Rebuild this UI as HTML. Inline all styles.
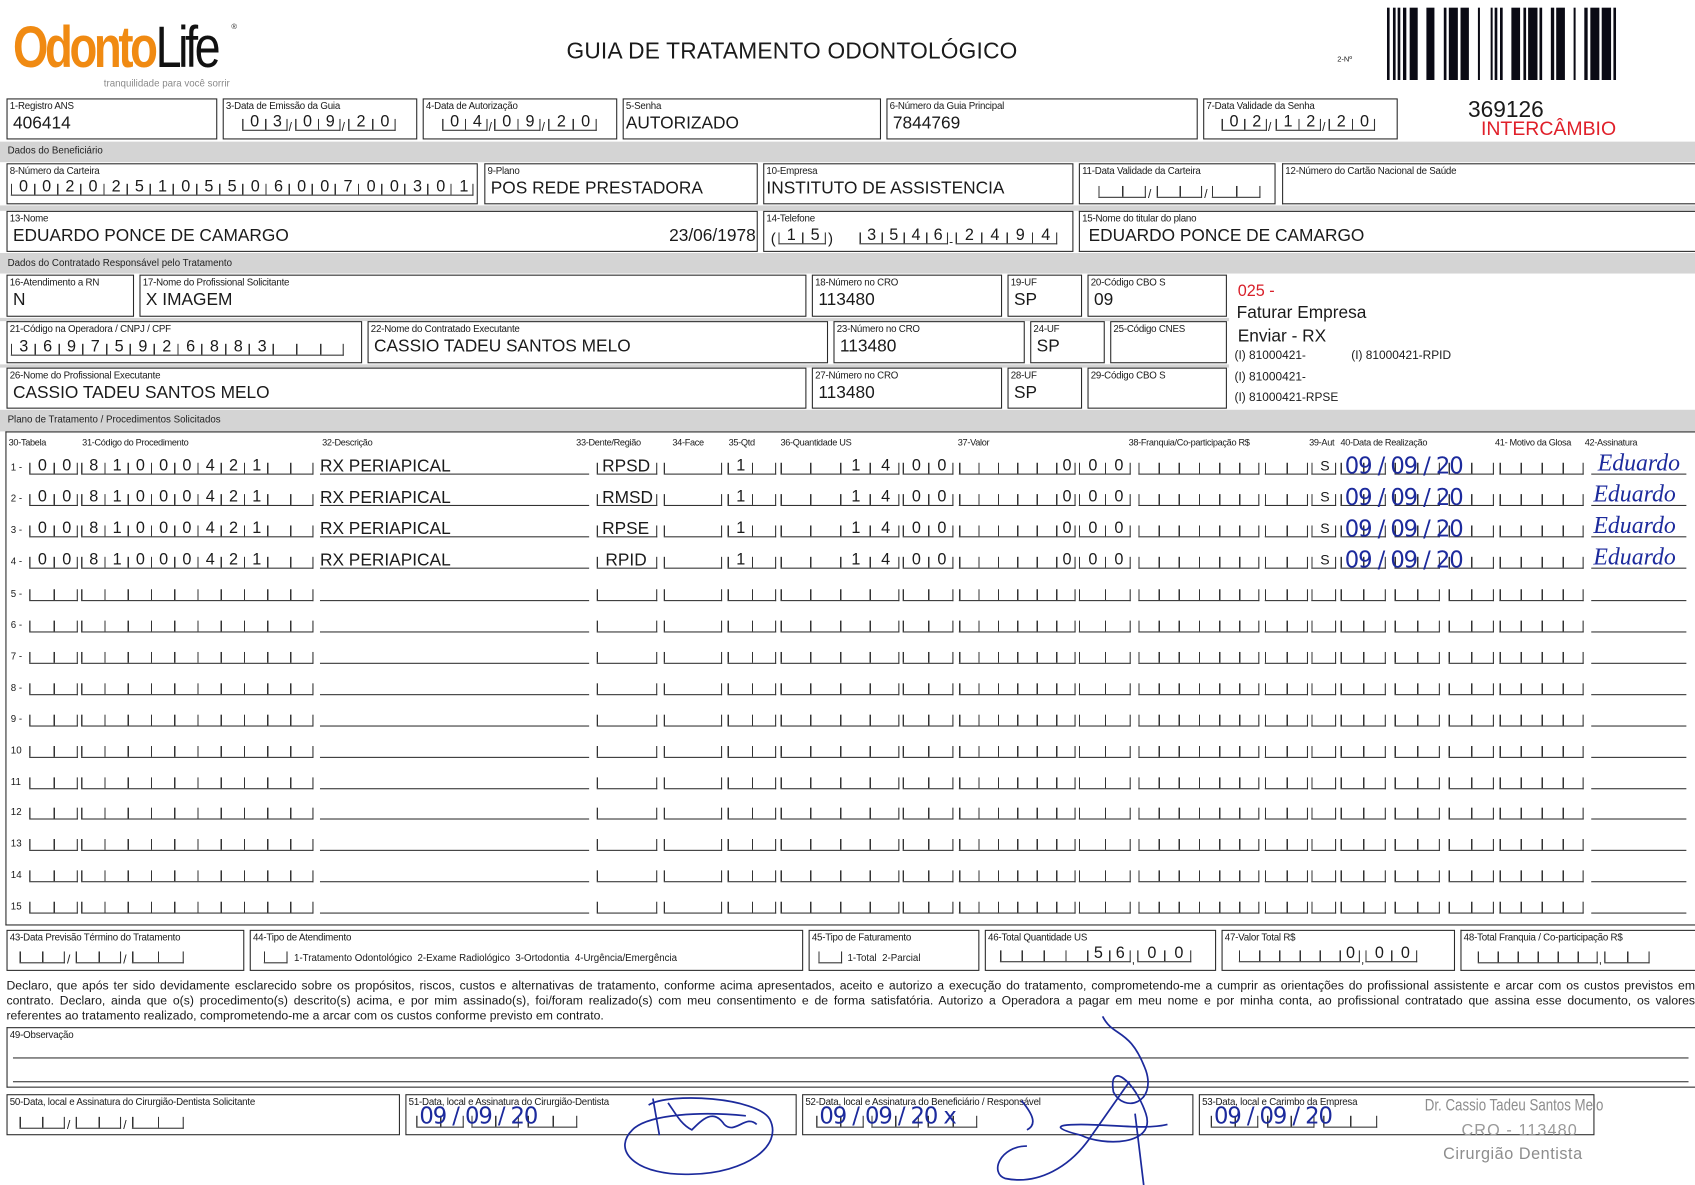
<!DOCTYPE html>
<html><head><meta charset="utf-8">
<style>
*{margin:0;padding:0;box-sizing:border-box}
html,body{width:1695px;height:1185px;overflow:hidden;background:#fff}
body{font-family:"Liberation Sans",Arial,sans-serif;color:#1a1a1a}
#p{position:absolute;left:0;top:0;width:1568px;height:1096px;transform:scale(1.081,1.0812);transform-origin:0 0}
.g{position:absolute;left:0;width:1568px;background:#d4d4d4}
.gt{position:absolute;font-size:9px;left:7px;color:#222}
.b{position:absolute;border:1.6px solid #2a2a2a;background:#fff}
.l{position:absolute;left:2px;top:1px;font-size:9px;white-space:nowrap;letter-spacing:-.2px}
.v{position:absolute;left:5px;top:14px;font-size:16px;white-space:nowrap}
.c{position:absolute;height:11px;border-bottom:1.4px solid #333;border-right:1.3px solid #333;font-style:normal;
 background:repeating-linear-gradient(90deg,#333 0 1.3px,transparent 1.3px var(--w));
 font-size:15px;line-height:11px;white-space:nowrap;overflow:visible}
.c span{position:relative;top:-3px;letter-spacing:calc(var(--w) - 8.3px);padding-left:calc((var(--w) - 8.3px)/2 + 1px)}
.ln{position:absolute;height:11px;border-bottom:1.4px solid #333}
.r{position:absolute;left:0;width:1568px;height:18px}
.r .n{position:absolute;left:10px;top:3px;font-size:9px}
.a{left:27px;top:4px;width:45px;--w:22.5px}
.bb{left:75px;top:4px;width:215px;--w:21.5px}
.d{left:296px;top:4px;width:249px}
.e{left:552px;top:4px;width:56px;--w:56px}
.f{left:614px;top:4px;width:54px;--w:54px}
.gq{left:673px;top:4px;width:45px;--w:22.5px}
.h{left:722px;top:4px;width:110px;--w:27.5px}
.k{left:835px;top:4px;width:47px;--w:23.5px}
.m{left:887px;top:4px;width:108px;--w:18px}
.nn{left:998px;top:4px;width:48px;--w:24px}
.o{left:1053px;top:4px;width:112px;--w:18.67px}
.pp{left:1170px;top:4px;width:40px;--w:20px}
.q{left:1213px;top:4px;width:23px;--w:23px}
.s{left:1240px;top:4px;width:42px;--w:21px}
.t{left:1290px;top:4px;width:42px;--w:21px}
.u{left:1340px;top:4px;width:42px;--w:21px}
.vv{left:1387px;top:4px;width:78px;--w:19.5px}
.w{left:1472px;top:4px;width:88px}
.sl{position:absolute;top:2px;font-size:11px}
.tx{position:absolute;font-size:16px;white-space:nowrap;top:-1px}
.hw{position:absolute;font-family:"Liberation Serif",serif;font-style:italic;color:#1c2a9c;white-space:nowrap}
.hd{position:absolute;font-family:"DejaVu Sans",sans-serif;color:#1c2a9c;white-space:nowrap;font-size:21px;letter-spacing:-1px}
.hl{position:absolute;top:404px;font-size:8.5px;white-space:nowrap;letter-spacing:-.3px}
.par div{font-size:11.3px;line-height:14px;white-space:nowrap;text-align:justify;text-align-last:justify;width:1562px}
</style></head><body><div id="p">

<div style="position:absolute;left:12px;top:14px;font-size:54px;line-height:60px;white-space:nowrap;letter-spacing:-4px">
<span style="color:#f08a12;font-weight:bold;font-family:'Liberation Sans Narrow','Liberation Sans',sans-serif;display:inline-block;transform:scaleX(.78);transform-origin:0 0;margin-right:-36px">Odonto</span><span style="color:#111;font-weight:normal;font-family:'Liberation Sans Narrow','Liberation Sans',sans-serif;display:inline-block;transform:scaleX(.8);transform-origin:0 0">Life</span></div>
<div style="position:absolute;left:214px;top:22px;font-size:7px">®</div>
<div style="position:absolute;left:96px;top:72px;font-size:9px;color:#8a8a8a">tranquilidade para você sorrir</div>

<div style="position:absolute;left:524px;top:36px;font-size:21px;letter-spacing:.2px">GUIA DE TRATAMENTO ODONTOLÓGICO</div>
<div style="position:absolute;left:1237px;top:52px;font-size:7px">2-Nº</div>
<svg style="position:absolute;left:1283px;top:7px" width="212" height="67" viewBox="20 0 685 210" preserveAspectRatio="none">
<g fill="#0a0a14">
<rect x="20" y="0" width="8" height="210"/><rect x="38" width="8" height="210"/><rect x="52" width="8" height="210"/><rect x="68" width="10" height="210"/><rect x="88" width="24" height="210"/><rect x="138" width="24" height="210"/><rect x="190" width="8" height="210"/><rect x="205" width="27" height="210"/><rect x="240" width="25" height="210"/><rect x="292" width="6" height="210"/><rect x="330" width="6" height="210"/><rect x="342" width="8" height="210"/><rect x="358" width="8" height="210"/><rect x="392" width="26" height="210"/><rect x="428" width="8" height="210"/><rect x="442" width="28" height="210"/><rect x="476" width="8" height="210"/><rect x="510" width="10" height="210"/><rect x="526" width="26" height="210"/><rect x="578" width="6" height="210"/><rect x="610" width="10" height="210"/><rect x="628" width="27" height="210"/><rect x="662" width="28" height="210"/><rect x="697" width="8" height="210"/></g></svg>

<div style="position:absolute;left:1358px;top:90px;font-size:21px">369126</div>
<div style="position:absolute;left:1370px;top:109px;font-size:18px;color:#e0202a">INTERCÂMBIO</div>

<div class="b" style="left:6px;top:91px;width:195px;height:38px"><span class="l">1-Registro ANS</span><span class="v">406414</span></div>
<div class="b" style="left:206px;top:91px;width:180px;height:38px"><span class="l">3-Data de Emissão da Guia</span></div>
<div class="b" style="left:391px;top:91px;width:180px;height:38px"><span class="l">4-Data de Autorização</span></div>
<div class="b" style="left:576px;top:91px;width:239px;height:38px"><span class="l">5-Senha</span><span class="v" style="left:2px">AUTORIZADO</span></div>
<div class="b" style="left:820px;top:91px;width:288px;height:38px"><span class="l">6-Número da Guia Principal</span><span class="v">7844769</span></div>
<div class="b" style="left:1113px;top:91px;width:180px;height:38px"><span class="l">7-Data Validade da Senha</span></div>
<div class="c" style="left:224px;top:110px;width:42px;--w:21px"><span>03</span></div><span class="sl" style="left:267px;top:112px">/</span>
<div class="c" style="left:273px;top:110px;width:42px;--w:21px"><span>09</span></div><span class="sl" style="left:316px;top:112px">/</span>
<div class="c" style="left:322px;top:110px;width:44px;--w:22px"><span>20</span></div>
<div class="c" style="left:409px;top:110px;width:42px;--w:21px"><span>04</span></div><span class="sl" style="left:452px;top:112px">/</span>
<div class="c" style="left:457px;top:110px;width:43px;--w:21.5px"><span>09</span></div><span class="sl" style="left:501px;top:112px">/</span>
<div class="c" style="left:507px;top:110px;width:45px;--w:22.5px"><span>20</span></div>
<div class="c" style="left:1130px;top:110px;width:42px;--w:21px"><span>02</span></div><span class="sl" style="left:1173px;top:112px">/</span>
<div class="c" style="left:1180px;top:110px;width:42px;--w:21px"><span>12</span></div><span class="sl" style="left:1223px;top:112px">/</span>
<div class="c" style="left:1229px;top:110px;width:43px;--w:21.5px"><span>20</span></div>

<div class="g" style="top:131px;height:19px"></div><div class="gt" style="top:134px">Dados do Beneficiário</div>
<div class="g" style="top:190px;height:5px"></div>
<div class="g" style="top:234px;height:19px"></div><div class="gt" style="top:238px">Dados do Contratado Responsável pelo Tratamento</div>
<div class="g" style="top:294px;height:3px;width:1137px"></div>
<div class="g" style="top:337px;height:3px;width:1137px"></div>
<div class="g" style="top:379px;height:20px"></div><div class="gt" style="top:383px">Plano de Tratamento / Procedimentos Solicitados</div>

<div class="b" style="left:6px;top:151px;width:436px;height:38px"><span class="l">8-Número da Carteira</span></div>
<div class="c" style="left:10px;top:170px;width:428px;--w:21.4px"><span>00202510550600700301</span></div>
<div class="b" style="left:448px;top:151px;width:253px;height:38px"><span class="l">9-Plano</span><span class="v">POS REDE PRESTADORA</span></div>
<div class="b" style="left:706px;top:151px;width:287px;height:38px"><span class="l">10-Empresa</span><span class="v" style="left:2px">INSTITUTO DE ASSISTENCIA</span></div>
<div class="b" style="left:998px;top:151px;width:182px;height:38px"><span class="l">11-Data Validade da Carteira</span></div>
<div class="c" style="left:1016px;top:172px;width:44px;--w:22px"></div><span class="sl" style="left:1062px;top:174px">/</span>
<div class="c" style="left:1070px;top:172px;width:42px;--w:21px"></div><span class="sl" style="left:1114px;top:174px">/</span>
<div class="c" style="left:1121px;top:172px;width:45px;--w:22.5px"></div>
<div class="b" style="left:1186px;top:151px;width:382px;height:38px;border-right:none"><span class="l">12-Número do Cartão Nacional de Saúde</span></div>

<div class="b" style="left:6px;top:195px;width:695px;height:38px"><span class="l">13-Nome</span><span class="v">EDUARDO PONCE DE CAMARGO</span><span class="v" style="left:612px">23/06/1978</span></div>
<div class="b" style="left:706px;top:195px;width:287px;height:38px"><span class="l">14-Telefone</span></div>
<span style="position:absolute;left:713px;top:212px;font-size:14px">(</span>
<div class="c" style="left:720px;top:215px;width:44px;--w:22px"><span>15</span></div><span style="position:absolute;left:766px;top:212px;font-size:14px">)</span>
<div class="c" style="left:795px;top:215px;width:82px;--w:20.5px"><span>3546</span></div><span class="sl" style="left:878px;top:218px">-</span>
<div class="c" style="left:884px;top:215px;width:94px;--w:23.5px"><span>2494</span></div>
<div class="b" style="left:998px;top:195px;width:570px;height:38px;border-right:none"><span class="l">15-Nome do titular do plano</span><span class="v" style="left:8px">EDUARDO PONCE DE CAMARGO</span></div>

<div class="b" style="left:6px;top:254px;width:118px;height:39px"><span class="l">16-Atendimento a RN</span><span class="v">N</span></div>
<div class="b" style="left:129px;top:254px;width:617px;height:39px"><span class="l">17-Nome do Profissional Solicitante</span><span class="v">X IMAGEM</span></div>
<div class="b" style="left:751px;top:254px;width:176px;height:39px"><span class="l">18-Número no CRO</span><span class="v">113480</span></div>
<div class="b" style="left:932px;top:254px;width:69px;height:39px"><span class="l">19-UF</span><span class="v">SP</span></div>
<div class="b" style="left:1006px;top:254px;width:129px;height:39px"><span class="l">20-Código CBO S</span><span class="v">09</span></div>
<div class="b" style="left:6px;top:297px;width:329px;height:39px"><span class="l">21-Código na Operadora / CNPJ / CPF</span></div>
<div class="c" style="left:10px;top:318px;width:308px;--w:22px"><span>36975926883</span></div>
<div class="b" style="left:340px;top:297px;width:426px;height:39px"><span class="l">22-Nome do Contratado Executante</span><span class="v">CASSIO TADEU SANTOS MELO</span></div>
<div class="b" style="left:771px;top:297px;width:177px;height:39px"><span class="l">23-Número no CRO</span><span class="v">113480</span></div>
<div class="b" style="left:953px;top:297px;width:69px;height:39px"><span class="l">24-UF</span><span class="v">SP</span></div>
<div class="b" style="left:1027px;top:297px;width:108px;height:39px"><span class="l">25-Código CNES</span></div>
<div class="b" style="left:6px;top:340px;width:740px;height:38px"><span class="l">26-Nome do Profissional Executante</span><span class="v">CASSIO TADEU SANTOS MELO</span></div>
<div class="b" style="left:751px;top:340px;width:176px;height:38px"><span class="l">27-Número no CRO</span><span class="v">113480</span></div>
<div class="b" style="left:932px;top:340px;width:69px;height:38px"><span class="l">28-UF</span><span class="v">SP</span></div>
<div class="b" style="left:1006px;top:340px;width:129px;height:38px"><span class="l">29-Código CBO S</span></div>

<div style="position:absolute;left:1145px;top:261px;font-size:15px;color:#d8202a">025 -</div>
<div style="position:absolute;left:1144px;top:281px;font-size:16px">Faturar Empresa</div>
<div style="position:absolute;left:1145px;top:303px;font-size:16px">Enviar - RX</div>
<div style="position:absolute;left:1142px;top:323px;font-size:11px">(I) 81000421-</div>
<div style="position:absolute;left:1250px;top:323px;font-size:11px">(I) 81000421-RPID</div>
<div style="position:absolute;left:1142px;top:343px;font-size:11px">(I) 81000421-</div>
<div style="position:absolute;left:1142px;top:362px;font-size:11px">(I) 81000421-RPSE</div>

<div class="b" style="left:5px;top:399px;width:1563px;height:457px;background:transparent;border-right:none"></div>
<span class="hl" style="left:8px">30-Tabela</span><span class="hl" style="left:76px">31-Código do Procedimento</span><span class="hl" style="left:298px">32-Descrição</span><span class="hl" style="left:533px">33-Dente/Região</span><span class="hl" style="left:622px">34-Face</span><span class="hl" style="left:674px">35-Qtd</span><span class="hl" style="left:722px">36-Quantidade US</span><span class="hl" style="left:886px">37-Valor</span><span class="hl" style="left:1044px">38-Franquia/Co-participação R$</span><span class="hl" style="left:1211px">39-Aut</span><span class="hl" style="left:1240px">40-Data de Realização</span><span class="hl" style="left:1383px">41- Motivo da Glosa</span><span class="hl" style="left:1466px">42-Assinatura</span>

<div class="r" style="top:424px"><span class="n">1 -</span><i class="c a"><span>00</span></i><i class="c bb"><span>81000421</span></i><i class="ln d"></i><span class="tx" style="left:296px">RX PERIAPICAL</span><i class="c e"></i><span class="tx" style="left:557px">RPSD</span><i class="c f"></i><i class="c gq"><span>1</span></i><i class="c h"><span style="margin-left:55px">14</span></i><i class="c k"><span>00</span></i><i class="c m"><span style="margin-left:90px">0</span></i><i class="c nn"><span>00</span></i><i class="c o"></i><i class="c pp"></i><i class="c q"><span style="font-size:13px">S</span></i><i class="c s"></i><i class="c t"></i><i class="c u"></i><i class="c vv"></i><i class="ln w"></i><span class="hd" style="left:1244px;top:-5px">09 / 09 / 20</span><span class="hw" style="left:1478px;top:-9px;font-size:22px">Eduardo</span></div>
<div class="r" style="top:453px"><span class="n">2 -</span><i class="c a"><span>00</span></i><i class="c bb"><span>81000421</span></i><i class="ln d"></i><span class="tx" style="left:296px">RX PERIAPICAL</span><i class="c e"></i><span class="tx" style="left:557px">RMSD</span><i class="c f"></i><i class="c gq"><span>1</span></i><i class="c h"><span style="margin-left:55px">14</span></i><i class="c k"><span>00</span></i><i class="c m"><span style="margin-left:90px">0</span></i><i class="c nn"><span>00</span></i><i class="c o"></i><i class="c pp"></i><i class="c q"><span style="font-size:13px">S</span></i><i class="c s"></i><i class="c t"></i><i class="c u"></i><i class="c vv"></i><i class="ln w"></i><span class="hd" style="left:1244px;top:-5px">09 / 09 / 20</span><span class="hw" style="left:1474px;top:-9px;font-size:22px">Eduardo</span></div>
<div class="r" style="top:482px"><span class="n">3 -</span><i class="c a"><span>00</span></i><i class="c bb"><span>81000421</span></i><i class="ln d"></i><span class="tx" style="left:296px">RX PERIAPICAL</span><i class="c e"></i><span class="tx" style="left:557px">RPSE</span><i class="c f"></i><i class="c gq"><span>1</span></i><i class="c h"><span style="margin-left:55px">14</span></i><i class="c k"><span>00</span></i><i class="c m"><span style="margin-left:90px">0</span></i><i class="c nn"><span>00</span></i><i class="c o"></i><i class="c pp"></i><i class="c q"><span style="font-size:13px">S</span></i><i class="c s"></i><i class="c t"></i><i class="c u"></i><i class="c vv"></i><i class="ln w"></i><span class="hd" style="left:1244px;top:-5px">09 / 09 / 20</span><span class="hw" style="left:1474px;top:-9px;font-size:22px">Eduardo</span></div>
<div class="r" style="top:511px"><span class="n">4 -</span><i class="c a"><span>00</span></i><i class="c bb"><span>81000421</span></i><i class="ln d"></i><span class="tx" style="left:296px">RX PERIAPICAL</span><i class="c e"></i><span class="tx" style="left:560px">RPID</span><i class="c f"></i><i class="c gq"><span>1</span></i><i class="c h"><span style="margin-left:55px">14</span></i><i class="c k"><span>00</span></i><i class="c m"><span style="margin-left:90px">0</span></i><i class="c nn"><span>00</span></i><i class="c o"></i><i class="c pp"></i><i class="c q"><span style="font-size:13px">S</span></i><i class="c s"></i><i class="c t"></i><i class="c u"></i><i class="c vv"></i><i class="ln w"></i><span class="hd" style="left:1244px;top:-5px">09 / 09 / 20</span><span class="hw" style="left:1474px;top:-9px;font-size:22px">Eduardo</span></div>
<div class="r" style="top:541px"><span class="n">5 -</span><i class="c a"></i><i class="c bb"></i><i class="ln d"></i><i class="c e"></i><i class="c f"></i><i class="c gq"></i><i class="c h"></i><i class="c k"></i><i class="c m"></i><i class="c nn"></i><i class="c o"></i><i class="c pp"></i><i class="c q"></i><i class="c s"></i><i class="c t"></i><i class="c u"></i><i class="c vv"></i><i class="ln w"></i></div>
<div class="r" style="top:570px"><span class="n">6 -</span><i class="c a"></i><i class="c bb"></i><i class="ln d"></i><i class="c e"></i><i class="c f"></i><i class="c gq"></i><i class="c h"></i><i class="c k"></i><i class="c m"></i><i class="c nn"></i><i class="c o"></i><i class="c pp"></i><i class="c q"></i><i class="c s"></i><i class="c t"></i><i class="c u"></i><i class="c vv"></i><i class="ln w"></i></div>
<div class="r" style="top:599px"><span class="n">7 -</span><i class="c a"></i><i class="c bb"></i><i class="ln d"></i><i class="c e"></i><i class="c f"></i><i class="c gq"></i><i class="c h"></i><i class="c k"></i><i class="c m"></i><i class="c nn"></i><i class="c o"></i><i class="c pp"></i><i class="c q"></i><i class="c s"></i><i class="c t"></i><i class="c u"></i><i class="c vv"></i><i class="ln w"></i></div>
<div class="r" style="top:628px"><span class="n">8 -</span><i class="c a"></i><i class="c bb"></i><i class="ln d"></i><i class="c e"></i><i class="c f"></i><i class="c gq"></i><i class="c h"></i><i class="c k"></i><i class="c m"></i><i class="c nn"></i><i class="c o"></i><i class="c pp"></i><i class="c q"></i><i class="c s"></i><i class="c t"></i><i class="c u"></i><i class="c vv"></i><i class="ln w"></i></div>
<div class="r" style="top:657px"><span class="n">9 -</span><i class="c a"></i><i class="c bb"></i><i class="ln d"></i><i class="c e"></i><i class="c f"></i><i class="c gq"></i><i class="c h"></i><i class="c k"></i><i class="c m"></i><i class="c nn"></i><i class="c o"></i><i class="c pp"></i><i class="c q"></i><i class="c s"></i><i class="c t"></i><i class="c u"></i><i class="c vv"></i><i class="ln w"></i></div>
<div class="r" style="top:686px"><span class="n">10</span><i class="c a"></i><i class="c bb"></i><i class="ln d"></i><i class="c e"></i><i class="c f"></i><i class="c gq"></i><i class="c h"></i><i class="c k"></i><i class="c m"></i><i class="c nn"></i><i class="c o"></i><i class="c pp"></i><i class="c q"></i><i class="c s"></i><i class="c t"></i><i class="c u"></i><i class="c vv"></i><i class="ln w"></i></div>
<div class="r" style="top:715px"><span class="n">11</span><i class="c a"></i><i class="c bb"></i><i class="ln d"></i><i class="c e"></i><i class="c f"></i><i class="c gq"></i><i class="c h"></i><i class="c k"></i><i class="c m"></i><i class="c nn"></i><i class="c o"></i><i class="c pp"></i><i class="c q"></i><i class="c s"></i><i class="c t"></i><i class="c u"></i><i class="c vv"></i><i class="ln w"></i></div>
<div class="r" style="top:743px"><span class="n">12</span><i class="c a"></i><i class="c bb"></i><i class="ln d"></i><i class="c e"></i><i class="c f"></i><i class="c gq"></i><i class="c h"></i><i class="c k"></i><i class="c m"></i><i class="c nn"></i><i class="c o"></i><i class="c pp"></i><i class="c q"></i><i class="c s"></i><i class="c t"></i><i class="c u"></i><i class="c vv"></i><i class="ln w"></i></div>
<div class="r" style="top:772px"><span class="n">13</span><i class="c a"></i><i class="c bb"></i><i class="ln d"></i><i class="c e"></i><i class="c f"></i><i class="c gq"></i><i class="c h"></i><i class="c k"></i><i class="c m"></i><i class="c nn"></i><i class="c o"></i><i class="c pp"></i><i class="c q"></i><i class="c s"></i><i class="c t"></i><i class="c u"></i><i class="c vv"></i><i class="ln w"></i></div>
<div class="r" style="top:801px"><span class="n">14</span><i class="c a"></i><i class="c bb"></i><i class="ln d"></i><i class="c e"></i><i class="c f"></i><i class="c gq"></i><i class="c h"></i><i class="c k"></i><i class="c m"></i><i class="c nn"></i><i class="c o"></i><i class="c pp"></i><i class="c q"></i><i class="c s"></i><i class="c t"></i><i class="c u"></i><i class="c vv"></i><i class="ln w"></i></div>
<div class="r" style="top:830px"><span class="n">15</span><i class="c a"></i><i class="c bb"></i><i class="ln d"></i><i class="c e"></i><i class="c f"></i><i class="c gq"></i><i class="c h"></i><i class="c k"></i><i class="c m"></i><i class="c nn"></i><i class="c o"></i><i class="c pp"></i><i class="c q"></i><i class="c s"></i><i class="c t"></i><i class="c u"></i><i class="c vv"></i><i class="ln w"></i></div>

<div class="b" style="left:6px;top:860px;width:220px;height:38px"><span class="l">43-Data Previsão Término do Tratamento</span></div>
<div class="c" style="left:18px;top:880px;width:42px;--w:21px"></div><span class="sl" style="left:62px;top:882px">/</span>
<div class="c" style="left:70px;top:880px;width:42px;--w:21px"></div><span class="sl" style="left:114px;top:882px">/</span>
<div class="c" style="left:122px;top:880px;width:48px;--w:24px"></div>
<div class="b" style="left:231px;top:860px;width:512px;height:38px"><span class="l">44-Tipo de Atendimento</span></div>
<div class="c" style="left:244px;top:880px;width:22px;--w:22px"></div>
<span style="position:absolute;left:272px;top:881px;font-size:9px">1-Tratamento Odontológico&nbsp; 2-Exame Radiológico&nbsp; 3-Ortodontia&nbsp; 4-Urgência/Emergência</span>
<div class="b" style="left:748px;top:860px;width:158px;height:38px"><span class="l">45-Tipo de Faturamento</span></div>
<div class="c" style="left:757px;top:880px;width:22px;--w:22px"></div>
<span style="position:absolute;left:784px;top:881px;font-size:9px">1-Total&nbsp; 2-Parcial</span>
<div class="b" style="left:911px;top:860px;width:214px;height:38px"><span class="l">46-Total Quantidade US</span></div>
<div class="c" style="left:925px;top:879px;width:121px;--w:20.17px"><span style="margin-left:80px">56</span></div><span class="sl" style="left:1047px;top:882px">,</span>
<div class="c" style="left:1052px;top:879px;width:50px;--w:25px"><span>00</span></div>
<div class="b" style="left:1130px;top:860px;width:216px;height:38px"><span class="l">47-Valor Total R$</span></div>
<div class="c" style="left:1146px;top:879px;width:112px;--w:18.67px"><span style="margin-left:93px">0</span></div><span class="sl" style="left:1259px;top:882px">,</span>
<div class="c" style="left:1263px;top:879px;width:48px;--w:24px"><span>00</span></div>
<div class="b" style="left:1351px;top:860px;width:217px;height:38px;border-right:none"><span class="l">48-Total Franquia / Co-participação R$</span></div>
<div class="c" style="left:1367px;top:880px;width:111px;--w:18.5px"></div><span class="sl" style="left:1479px;top:882px">,</span>
<div class="c" style="left:1484px;top:880px;width:42px;--w:21px"></div>

<div class="par" style="position:absolute;left:6px;top:905px">
<div>Declaro, que após ter sido devidamente esclarecido sobre os propósitos, riscos, custos e alternativas de tratamento, conforme acima apresentados, aceito e autorizo a execução do tratamento, comprometendo-me a cumprir as orientações do profissional assistente e arcar com os custos previstos em</div>
<div>contrato. Declaro, ainda que o(s) procedimento(s) descrito(s) acima, e por mim assinado(s), foi/foram realizado(s) com meu consentimento e de forma satisfatória. Autorizo a Operadora a pagar em meu nome e por minha conta, ao profissional contratado que assina esse documento, os valores</div>
<div style="text-align:left;text-align-last:left">referentes ao tratamento realizado, comprometendo-me a arcar com os custos conforme previsto em contrato.</div>
</div>

<div class="b" style="left:6px;top:950px;width:1562px;height:56px;border-right:none"><span class="l">49-Observação</span></div>
<div style="position:absolute;left:12px;top:978px;width:1550px;border-top:1.4px solid #333"></div>
<div style="position:absolute;left:12px;top:1000px;width:1550px;border-top:1.4px solid #333"></div>

<div class="b" style="left:6px;top:1012px;width:364px;height:38px"><span class="l">50-Data, local e Assinatura do Cirurgião-Dentista Solicitante</span></div>
<div class="c" style="left:18px;top:1033px;width:42px;--w:21px"></div><span class="sl" style="left:62px;top:1035px">/</span>
<div class="c" style="left:70px;top:1033px;width:42px;--w:21px"></div><span class="sl" style="left:114px;top:1035px">/</span>
<div class="c" style="left:122px;top:1033px;width:48px;--w:24px"></div>
<div class="b" style="left:375px;top:1012px;width:362px;height:38px;background:transparent"><span class="l">51-Data, local e Assinatura do Cirurgião-Dentista</span></div>
<div class="b" style="left:742px;top:1012px;width:362px;height:38px;background:transparent"><span class="l">52-Data, local e Assinatura do Beneficiário / Responsável</span></div>
<div class="b" style="left:1109px;top:1012px;width:366px;height:38px;background:transparent"><span class="l">53-Data, local e Carimbo da Empresa</span></div>
<div class="c" style="left:385px;top:1032px;width:44px;--w:22px"></div><div class="c" style="left:436px;top:1032px;width:44px;--w:22px"></div><div class="c" style="left:488px;top:1032px;width:46px;--w:23px"></div>
<div class="c" style="left:755px;top:1032px;width:44px;--w:22px"></div><div class="c" style="left:806px;top:1032px;width:44px;--w:22px"></div><div class="c" style="left:858px;top:1032px;width:46px;--w:23px"></div>
<div class="c" style="left:1120px;top:1032px;width:44px;--w:22px"></div><div class="c" style="left:1172px;top:1032px;width:44px;--w:22px"></div><div class="c" style="left:1224px;top:1032px;width:50px;--w:25px"></div>
<span class="hd" style="left:388px;top:1020px">09 / 09 / 20</span>
<span class="hd" style="left:758px;top:1020px">09 / 09 / 20 x</span>
<span class="hd" style="left:1123px;top:1020px">09 / 09 / 20</span>

<div style="position:absolute;left:1318px;top:1014px;font-size:15px;color:#8d8d8d;transform:scaleX(.82);transform-origin:0 0;white-space:nowrap">Dr. Cassio Tadeu Santos Melo</div>
<div style="position:absolute;left:1352px;top:1037px;font-size:15px;color:#9a9a9a;letter-spacing:1px">CRO - 113480</div>
<div style="position:absolute;left:1335px;top:1059px;font-size:15px;color:#8d8d8d;letter-spacing:.5px">Cirurgião Dentista</div>

<svg style="position:absolute;left:0;top:0" width="1568" height="1096" fill="none" stroke="#1c2a9c" stroke-width="1.6">
<path d="M600 1022 C620 1010 700 1015 712 1035 C725 1060 690 1085 640 1086 C590 1088 565 1065 585 1045 C600 1030 650 1028 690 1032"/>
<path d="M604 1016 L610 1050 M618 1020 C625 1030 630 1040 640 1045 C650 1035 660 1025 670 1040 C680 1050 690 1030 700 1040"/>
<path d="M945 1018 C955 1030 960 1040 950 1045 M1020 940 C1030 960 1045 950 1060 990 C1070 1020 1040 1030 1030 1010 C1025 980 1050 1000 1060 1030 C1070 1060 1020 1060 1000 1050 C980 1045 970 1040 1000 1040 C1030 1040 1060 1045 1080 1040 M1045 1000 L1010 1050 C990 1080 960 1096 930 1090 C915 1085 925 1060 950 1060 M1050 1030 L1058 1096"/>
</svg>
</div></body></html>
